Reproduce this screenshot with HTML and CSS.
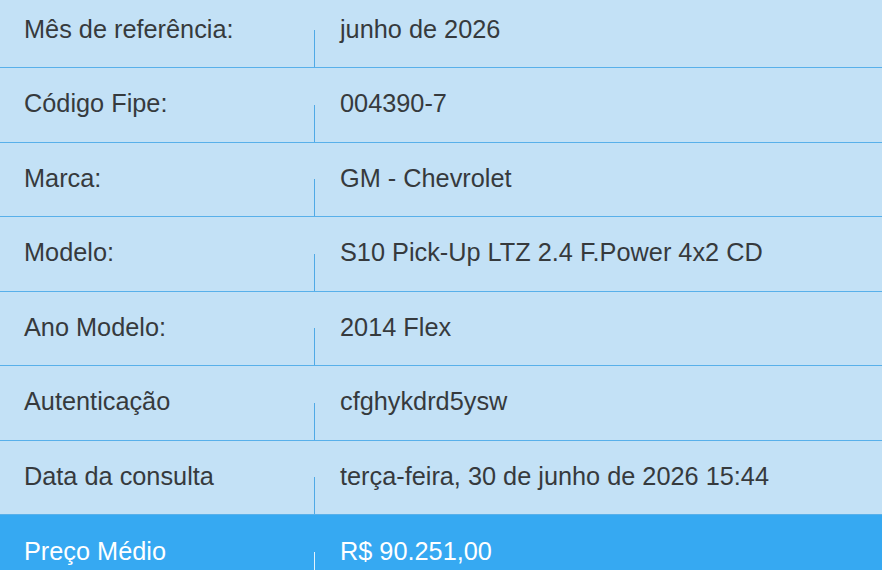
FILE: index.html
```html
<!DOCTYPE html>
<html lang="pt-BR">
<head>
<meta charset="utf-8">
<title>Consulta Fipe</title>
<link rel="stylesheet" href="styles.css">
</head>
<body>
<div class="fipe-table">
  <div class="row"><div class="label">Mês de referência:</div><div class="value">junho de 2026</div></div>
  <div class="row"><div class="label">Código Fipe:</div><div class="value">004390-7</div></div>
  <div class="row"><div class="label">Marca:</div><div class="value">GM - Chevrolet</div></div>
  <div class="row"><div class="label">Modelo:</div><div class="value">S10 Pick-Up LTZ 2.4 F.Power 4x2 CD</div></div>
  <div class="row"><div class="label">Ano Modelo:</div><div class="value">2014 Flex</div></div>
  <div class="row"><div class="label">Autenticação</div><div class="value">cfghykdrd5ysw</div></div>
  <div class="row"><div class="label">Data da consulta</div><div class="value">terça-feira, 30 de junho de 2026 15:44</div></div>
  <div class="row row-price"><div class="label">Preço Médio</div><div class="value">R$ 90.251,00</div></div>
</div>
</body>
</html>
```
FILE: styles.css
```css
html, body {
  margin: 0;
  padding: 0;
  background: #c3e1f6;
  overflow: hidden;
}

.fipe-table {
  margin-top: -6.5px;
  display: flex;
  flex-direction: column;
  font-family: "Liberation Sans", Arial, sans-serif;
  font-size: 25.3px;
  color: #363a3d;
}

.row {
  display: grid;
  grid-template-columns: 314px 1fr;
  height: 74.5px;
  box-sizing: border-box;
  border-bottom: 1px solid #58b0ea;
  background: #c3e1f6;
}

.label,
.value {
  display: flex;
  align-items: center;
  padding-bottom: 2px;
}

.label {
  padding-left: 24px;
}

.value {
  position: relative;
  padding-left: 26px;
}

.value::before {
  content: "";
  position: absolute;
  left: -0.5px;
  top: 50%;
  bottom: 0;
  width: 1px;
  background: #4fa9e6;
}

.row-price {
  background: #36a9f2;
  color: #ffffff;
  border-bottom: none;
}

.row-price .value::before {
  background: #e4f3fd;
}
```
